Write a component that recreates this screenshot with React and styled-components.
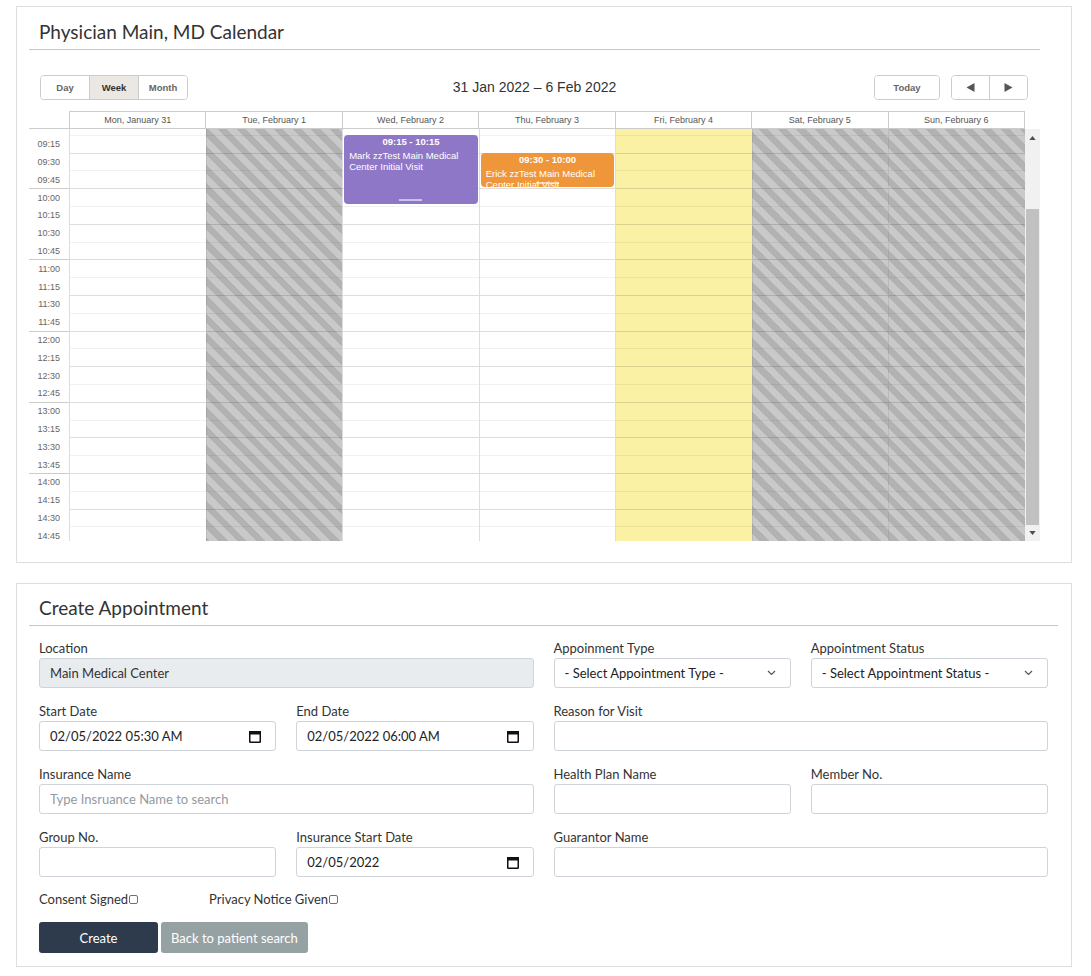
import React, { useLayoutEffect, useRef } from 'react';
import styled, { createGlobalStyle, css } from 'styled-components';

const GlobalStyle = createGlobalStyle`
  *, *::before, *::after { box-sizing: border-box; }
  html, body { margin: 0; padding: 0; background: #fff; }
  body { font-family: Lato, "Liberation Sans", Arial, sans-serif; color: #333; }
`;

const SLOT_H = 17.8;
const SCROLL_TOP = 12;

const Page = styled.main`
  width: 1091px;
  padding: 6px 19px 10px 16px;
  display: flex;
  flex-direction: column;
  gap: 20px;
`;

const Panel = styled.section`
  border: 1px solid #dedede;
  padding: ${(p) => p.$padTop}px ${(p) => p.$padRight}px ${(p) => p.$padBottom}px 12px;
`;

const PanelTitle = styled.h2`
  margin: 0 0 5px;
  padding: 0 10px;
  font-family: Lato, sans-serif;
  font-weight: 400;
  font-size: 19px;
  line-height: 24px;
  color: #333;
`;

const Rule = styled.hr`
  margin: 0;
  border: 0;
  border-top: 1px solid #c8c8c8;
`;

/* ---------- Calendar ---------- */
const Calendar = styled.div`
  font-family: "Liberation Sans", Arial, sans-serif;
  margin-top: 24px;
`;

const Toolbar = styled.div`
  display: grid;
  grid-template-columns: 1fr auto 1fr;
  align-items: center;
  height: 25px;
  margin-bottom: 12px;
`;

const ToolbarLeft = styled.div`
  display: flex;
  padding-left: 11px;
`;

const ToolbarRight = styled.div`
  display: flex;
  justify-content: flex-end;
  gap: 11px;
  padding-right: 12px;
`;

const BtnGroup = styled.div`
  display: flex;
  height: 25px;
  border: 1px solid #ccc;
  border-radius: 4px;
  overflow: hidden;
  background: #fff;
`;

const ToolBtn = styled.button`
  width: ${(p) => p.$w}px;
  height: 100%;
  padding: 0;
  border: 0;
  border-left: 1px solid #ccc;
  &:first-child { border-left: 0; }
  background: ${(p) => (p.$active ? '#ebe8e3' : '#fff')};
  color: ${(p) => (p.$active ? '#333' : '#666')};
  font: bold 9.5px "Liberation Sans", Arial, sans-serif;
  display: flex;
  align-items: center;
  justify-content: center;
`;

const RangeTitle = styled.div`
  font-size: 14px;
  color: #333;
  line-height: 25px;
  padding-top: 1px;
`;

const HeadRow = styled.div`
  display: flex;
  height: 18px;
`;

const HeadGutter = styled.div`
  width: 40px;
  flex: none;
  border-bottom: 1px solid #ccc;
`;

const HeadDays = styled.div`
  flex: 1;
  display: flex;
  border-top: 1px solid #ccc;
  border-bottom: 1px solid #ccc;
  border-right: 1px solid #ccc;
`;

const HeadCell = styled.div`
  flex: 1;
  border-left: 1px solid #ccc;
  font-size: 9px;
  color: #555;
  display: flex;
  align-items: center;
  justify-content: center;
`;

const HeadSpacer = styled.div`
  width: 15px;
  flex: none;
`;

const BodyRow = styled.div`
  display: flex;
  height: 412px;
`;

const Viewport = styled.div`
  flex: 1;
  overflow: hidden;
`;

const Grid = styled.div`
  display: flex;
`;

const Gutter = styled.div`
  width: 40px;
  flex: none;
`;

const GutterSlot = styled.div`
  height: ${SLOT_H}px;
  border-top: 1px solid ${(p) => (p.$hour ? '#ccc' : 'transparent')};
  display: flex;
  align-items: center;
  justify-content: flex-end;
  padding-right: 9px;
  font-size: 9px;
  color: #666;
`;

const stripes = css`
  background-image: repeating-linear-gradient(
    45deg,
    #b2b2b2 0 6.6px,
    #c9c9c9 6.6px 13.2px
  );
  background-attachment: fixed;
`;

const DayCol = styled.div`
  flex: 1;
  position: relative;
  border-left: 1px solid ${(p) => (p.$kind === 'off' ? 'rgba(0,0,0,0.07)' : '#ddd')};
  background: #fff;
  ${(p) => p.$kind === 'off' && stripes}
  ${(p) => p.$kind === 'today' && css`background: #fbf1a4;`}
`;

const Cell = styled.div`
  height: ${SLOT_H}px;
  border-top: 1px solid ${(p) => (p.$strong ? 'rgba(0,0,0,0.13)' : 'rgba(0,0,0,0.055)')};
`;

const Event = styled.div`
  position: absolute;
  left: 1px;
  right: 1px;
  border-radius: 4px;
  overflow: hidden;
  color: #fff;
  padding: 1px 5px;
  background: ${(p) => p.$color};
`;

const EventTime = styled.div`
  font-weight: bold;
  font-size: 9.5px;
  line-height: 12px;
  text-align: center;
`;

const EventText = styled.div`
  margin-top: 2px;
  font-size: 9.5px;
  line-height: 11px;
`;

const Handle = styled.div`
  position: absolute;
  bottom: 3px;
  left: 50%;
  width: 23px;
  height: 2px;
  margin-left: -11.5px;
  background: rgba(255, 255, 255, 0.55);
`;

const ScrollBar = styled.div`
  width: 15px;
  flex: none;
  background: #f1f1f1;
  display: flex;
  flex-direction: column;
`;

const ScrollArrow = styled.div`
  height: ${(p) => p.$h}px;
  display: flex;
  align-items: center;
  justify-content: center;
`;

const ScrollTrack = styled.div`
  flex: 1;
  display: flex;
  flex-direction: column;
  justify-content: flex-end;
`;

const Thumb = styled.div`
  height: 316px;
  margin: 0 1px;
  background: #c1c1c1;
`;

/* ---------- Form ---------- */
const Form = styled.form`
  margin-top: 14px;
  padding: 0 10px;
`;

const FieldGrid = styled.div`
  display: grid;
  grid-template-columns: repeat(4, 1fr);
  column-gap: 20px;
  row-gap: 15px;
`;

const Field = styled.div`
  grid-column: span ${(p) => p.$span || 1};
  display: flex;
  flex-direction: column;
  gap: 2px;
  min-width: 0;
`;

const Label = styled.label`
  font-size: 13px;
  line-height: 16px;
  color: #333;
`;

const controlBase = css`
  height: 30px;
  width: 100%;
  border: 1px solid #ced4da;
  border-radius: 3px;
  font-family: Lato, sans-serif;
  font-size: 13px;
  color: #333;
  background: #fff;
  padding: 0 10px;
`;

const TextInput = styled.input`
  ${controlBase};
  outline: none;
  &:disabled {
    background: #e9ecef;
    color: #333;
    -webkit-text-fill-color: #333;
  }
  &::placeholder {
    color: #949a9f;
  }
`;

const BoxControl = styled.div`
  ${controlBase};
  display: flex;
  align-items: center;
  justify-content: space-between;
  padding-right: ${(p) => p.$padRight || 14}px;
  color: #222;
`;

const CheckRow = styled.div`
  display: flex;
  gap: 71px;
  margin-top: 14px;
  height: 16px;
  align-items: center;
`;

const CheckLabel = styled.label`
  display: flex;
  align-items: center;
  font-size: 13px;
  line-height: 16px;
  color: #333;
`;

const CheckBox = styled.input`
  appearance: none;
  width: 9px;
  height: 9px;
  margin: 0 0 0 1px;
  border: 1px solid #707070;
  border-radius: 2px;
  background: #fff;
`;

const Actions = styled.div`
  display: flex;
  gap: 3px;
  margin-top: 15px;
`;

const Btn = styled.button`
  height: 31px;
  min-width: ${(p) => p.$minW || 0}px;
  border: 0;
  border-radius: 3px;
  font-family: Lato, sans-serif;
  font-size: 13px;
  color: #fff;
  padding: 0 10px;
  background: ${(p) => (p.$variant === 'primary' ? '#2e3b4c' : '#96a1a3')};
`;

/* ---------- Icons ---------- */
const Tri = ({ dir, size = 9, color = '#555' }) => {
  const vertical = dir === 'up' || dir === 'down';
  const pts =
    dir === 'left' ? '8,0 8,9 0,4.5' :
    dir === 'right' ? '0,0 0,9 8,4.5' :
    dir === 'up' ? '0,5 8,5 4,0' : '0,0 8,0 4,5';
  return (
    <svg width={vertical ? 7 : size} height={vertical ? 4 : size} viewBox={vertical ? '0 0 8 5' : '0 0 8 9'}>
      <polygon points={pts} fill={color} />
    </svg>
  );
};

const CalIcon = () => (
  <svg width="12" height="13" viewBox="0 0 12 13">
    <rect x="0.75" y="1.75" width="10.5" height="10.5" rx="0.5" fill="none" stroke="#111" strokeWidth="1.5" />
    <rect x="0" y="1" width="12" height="3.5" fill="#111" />
  </svg>
);

const Chevron = () => (
  <svg width="9" height="6" viewBox="0 0 9 6">
    <path d="M1 1l3.5 3.5L8 1" fill="none" stroke="#555" strokeWidth="1.2" />
  </svg>
);

/* ---------- Data ---------- */
const days = [
  { label: 'Mon, January 31', kind: 'work' },
  { label: 'Tue, February 1', kind: 'off' },
  { label: 'Wed, February 2', kind: 'work' },
  { label: 'Thu, February 3', kind: 'work' },
  { label: 'Fri, February 4', kind: 'today' },
  { label: 'Sat, February 5', kind: 'off' },
  { label: 'Sun, February 6', kind: 'off' },
];

const slots = Array.from({ length: 24 }, (_, i) => {
  const m = 9 * 60 + i * 15;
  const h = Math.floor(m / 60);
  const mm = m % 60;
  return {
    label: `${String(h).padStart(2, '0')}:${String(mm).padStart(2, '0')}`,
    mm,
    hiddenLabel: i === 0,
  };
});

const events = [
  { day: 2, start: 1, len: 4, time: '09:15 - 10:15', text: 'Mark zzTest Main Medical Center Initial Visit', color: '#8f77c8' },
  { day: 3, start: 2, len: 2, time: '09:30 - 10:00', text: 'Erick zzTest Main Medical Center Initial Visit', color: '#f0963a' },
];

function CalendarView() {
  const vp = useRef(null);
  useLayoutEffect(() => {
    if (vp.current) vp.current.scrollTop = SCROLL_TOP;
  }, []);
  return (
    <Calendar>
      <Toolbar>
        <ToolbarLeft>
          <BtnGroup>
            <ToolBtn type="button" $w={48}>Day</ToolBtn>
            <ToolBtn type="button" $w={49} $active>Week</ToolBtn>
            <ToolBtn type="button" $w={49}>Month</ToolBtn>
          </BtnGroup>
        </ToolbarLeft>
        <RangeTitle>31 Jan 2022 – 6 Feb 2022</RangeTitle>
        <ToolbarRight>
          <BtnGroup>
            <ToolBtn type="button" $w={64}>Today</ToolBtn>
          </BtnGroup>
          <BtnGroup>
            <ToolBtn type="button" $w={37}><Tri dir="left" /></ToolBtn>
            <ToolBtn type="button" $w={38}><Tri dir="right" /></ToolBtn>
          </BtnGroup>
        </ToolbarRight>
      </Toolbar>

      <HeadRow>
        <HeadGutter />
        <HeadDays>
          {days.map((d) => (
            <HeadCell key={d.label}>{d.label}</HeadCell>
          ))}
        </HeadDays>
        <HeadSpacer />
      </HeadRow>

      <BodyRow>
        <Viewport ref={vp}>
          <Grid>
            <Gutter>
              {slots.map((s) => (
                <GutterSlot key={s.label} $hour={s.mm === 0}>
                  {s.hiddenLabel ? '' : s.label}
                </GutterSlot>
              ))}
            </Gutter>
            {days.map((d, di) => (
              <DayCol key={d.label} $kind={d.kind}>
                {slots.map((s) => (
                  <Cell key={s.label} $strong={s.mm % 30 === 0} />
                ))}
                {events
                  .filter((e) => e.day === di)
                  .map((e) => (
                    <Event
                      key={e.time}
                      $color={e.color}
                      style={{ top: e.start * SLOT_H, height: e.len * SLOT_H - 1.5 }}
                    >
                      <EventTime>{e.time}</EventTime>
                      <EventText>{e.text}</EventText>
                      <Handle />
                    </Event>
                  ))}
              </DayCol>
            ))}
          </Grid>
        </Viewport>
        <ScrollBar>
          <ScrollArrow $h={17}><Tri dir="up" color="#505050" /></ScrollArrow>
          <ScrollTrack><Thumb /></ScrollTrack>
          <ScrollArrow $h={16}><Tri dir="down" color="#505050" /></ScrollArrow>
        </ScrollBar>
      </BodyRow>
    </Calendar>
  );
}

function AppointmentForm() {
  return (
    <Form onSubmit={(e) => e.preventDefault()}>
      <FieldGrid>
        <Field $span={2}>
          <Label>Location</Label>
          <TextInput disabled value="Main Medical Center" readOnly />
        </Field>
        <Field>
          <Label>Appoinment Type</Label>
          <BoxControl>
            <span>- Select Appointment Type -</span>
            <Chevron />
          </BoxControl>
        </Field>
        <Field>
          <Label>Appointment Status</Label>
          <BoxControl>
            <span>- Select Appointment Status -</span>
            <Chevron />
          </BoxControl>
        </Field>

        <Field>
          <Label>Start Date</Label>
          <BoxControl>
            <span>02/05/2022 05:30 AM</span>
            <CalIcon />
          </BoxControl>
        </Field>
        <Field>
          <Label>End Date</Label>
          <BoxControl>
            <span>02/05/2022 06:00 AM</span>
            <CalIcon />
          </BoxControl>
        </Field>
        <Field $span={2}>
          <Label>Reason for Visit</Label>
          <TextInput />
        </Field>

        <Field $span={2}>
          <Label>Insurance Name</Label>
          <TextInput placeholder="Type Insruance Name to search" />
        </Field>
        <Field>
          <Label>Health Plan Name</Label>
          <TextInput />
        </Field>
        <Field>
          <Label>Member No.</Label>
          <TextInput />
        </Field>

        <Field>
          <Label>Group No.</Label>
          <TextInput />
        </Field>
        <Field>
          <Label>Insurance Start Date</Label>
          <BoxControl>
            <span>02/05/2022</span>
            <CalIcon />
          </BoxControl>
        </Field>
        <Field $span={2}>
          <Label>Guarantor Name</Label>
          <TextInput />
        </Field>
      </FieldGrid>

      <CheckRow>
        <CheckLabel>Consent Signed<CheckBox type="checkbox" /></CheckLabel>
        <CheckLabel>Privacy Notice Given<CheckBox type="checkbox" /></CheckLabel>
      </CheckRow>

      <Actions>
        <Btn type="submit" $variant="primary" $minW={119}>Create</Btn>
        <Btn type="button">Back to patient search</Btn>
      </Actions>
    </Form>
  );
}

export default function App() {
  return (
    <>
      <GlobalStyle />
      <Page>
        <Panel $padTop={13} $padRight={31} $padBottom={21}>
          <PanelTitle>Physician Main, MD Calendar</PanelTitle>
          <Rule />
          <CalendarView />
        </Panel>
        <Panel $padTop={12} $padRight={13} $padBottom={13}>
          <PanelTitle>Create Appointment</PanelTitle>
          <Rule />
          <AppointmentForm />
        </Panel>
      </Page>
    </>
  );
}
